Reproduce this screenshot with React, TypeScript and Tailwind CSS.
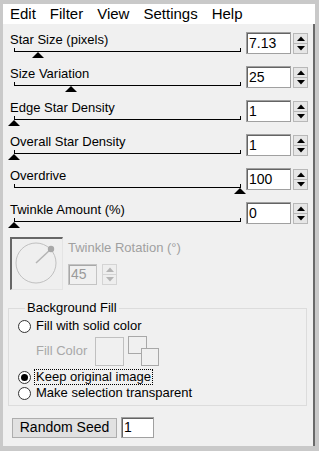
import React from "react";

const font = { fontFamily: '"Liberation Sans", Arial, sans-serif' };

type Row = { label: string; value: string; thumb: number };

const rows: Row[] = [
  { label: "Star Size (pixels)", value: "7.13", thumb: 24 },
  { label: "Size Variation", value: "25", thumb: 57 },
  { label: "Edge Star Density", value: "1", thumb: 0 },
  { label: "Overall Star Density", value: "1", thumb: 0 },
  { label: "Overdrive", value: "100", thumb: 226 },
  { label: "Twinkle Amount (%)", value: "0", thumb: 0 },
];

function Arrow({ up, color }: { up: boolean; color: string }) {
  return (
    <svg width="8" height="5" viewBox="0 0 8 5">
      <path d={up ? "M0 5 L4 0.5 L8 5 Z" : "M0 0 L4 4.5 L8 0 Z"} fill={color} />
    </svg>
  );
}

function Spinner({ disabled }: { disabled?: boolean }) {
  const c = disabled ? "#b4b4b4" : "#000";
  return (
    <div
      className={`flex flex-col w-[15px] h-[21px] border ${
        disabled ? "border-[#d4d4d4] bg-[#eeeeee]" : "border-[#b8b8b8] bg-[#e6e6e6]"
      }`}
    >
      <div className="flex-1 flex items-center justify-center">
        <Arrow up color={c} />
      </div>
      <div className={`h-px ${disabled ? "bg-[#d4d4d4]" : "bg-[#b8b8b8]"}`} />
      <div className="flex-1 flex items-center justify-center">
        <Arrow up={false} color={c} />
      </div>
    </div>
  );
}

function NumBox({
  value,
  w,
  h = "h-[22px]",
  disabled,
}: {
  value: string;
  w: string;
  h?: string;
  disabled?: boolean;
}) {
  return (
    <div
      className={`${w} ${h} flex items-center pl-[2px] text-[14px] border ${
        disabled
          ? "border-[#c4c4c4] bg-[#f0f0f0] text-[#9a9a9a] shadow-[inset_1px_1px_0_#a8a8a8]"
          : "border-[#a0a0a0] bg-white text-black shadow-[inset_1px_1px_0_#646464]"
      }`}
    >
      {value}
    </div>
  );
}

function Radio({ checked }: { checked?: boolean }) {
  return (
    <div className="w-[13px] h-[13px] rounded-full border border-[#333] bg-white flex items-center justify-center shrink-0">
      {checked && <div className="w-[7px] h-[7px] rounded-full bg-black" />}
    </div>
  );
}

function SliderRow({ row }: { row: Row }) {
  return (
    <div className="flex h-[34px]">
      <div className="ml-[7px] w-[232px]">
        <div className="mt-[8px] text-[13px] leading-[16px] text-black whitespace-nowrap">
          {row.label}
        </div>
        <div className="relative ml-[4px] w-[227px] h-[4px] border-x border-b border-black">
          {/* thumb */}
          <svg
            className="absolute top-[4px]"
            style={{ left: row.thumb - 7 }}
            width="12"
            height="6"
            viewBox="0 0 12 6"
          >
            <path d="M0 6 L6 0 L12 6 Z" fill="#000" />
          </svg>
        </div>
      </div>
      <div className="ml-[4px] mt-[8px]">
        <NumBox value={row.value} w="w-[45px]" />
      </div>
      <div className="ml-[2px] mt-[9px]">
        <Spinner />
      </div>
    </div>
  );
}

export default function App() {
  return (
    <div
      className="w-[319px] h-[451px] bg-[#c9c9c9] pt-[4px] pl-[3px] pr-[4px] pb-[5px] flex flex-col"
      style={font}
    >
      {/* Menu bar */}
      <div className="h-[20px] bg-white flex gap-[14px] pl-[7px] text-[15px] leading-[20px] text-black">
        <span>Edit</span>
        <span>Filter</span>
        <span>View</span>
        <span>Settings</span>
        <span>Help</span>
      </div>

      <div className="flex-1 bg-[#f0f0f0] border-r-2 border-[#6a6a6a] flex flex-col">
        {rows.map((r) => (
          <SliderRow key={r.label} row={r} />
        ))}

        {/* Twinkle rotation */}
        <div className="flex mt-[9px] ml-[7px]">
          <div className="w-[53px] h-[53px] border-t-2 border-l-2 border-[#666] border-b border-r border-b-[#e4e4e4] border-r-[#e4e4e4] bg-[#efefef]">
            <svg width="51" height="51" viewBox="0 0 51 51">
              <circle cx="24" cy="24" r="20" fill="none" stroke="#c0c0c0" strokeWidth="1" />
              <line x1="24" y1="24" x2="39" y2="10" stroke="#b4b4b4" strokeWidth="1.5" />
              <circle cx="39" cy="10" r="3.2" fill="#a8a8a8" />
            </svg>
          </div>
          <div className="ml-[5px] flex flex-col">
            <div className="mt-[3px] text-[13px] leading-[16px] text-[#a0a0a0] whitespace-nowrap">
              Twinkle Rotation (°)
            </div>
            <div className="flex mt-[8px] items-start">
              <NumBox value="45" w="w-[29px]" h="h-[21px]" disabled />
              <div className="ml-[5px]">
                <Spinner disabled />
              </div>
            </div>
          </div>
        </div>

        {/* Background Fill group */}
        <fieldset className="mt-[10px] ml-[5px] w-[299px] border border-[#dcdcdc] pb-[4px] pl-[9px]">
          <legend className="ml-[7px] px-[2px] text-[13px] leading-[16px] text-black">
            Background Fill
          </legend>
          <div className="flex items-center h-[16px] gap-[5px] mt-[2px] text-[13px] leading-[16px]">
            <Radio />
            <span>Fill with solid color</span>
          </div>
          <div className="flex items-center mt-[2px] ml-[18px]">
            <span className="text-[13px] leading-[16px] text-[#a8a8a8]">Fill Color</span>
            <div className="ml-[8px] w-[29px] h-[29px] border border-[#c0c0c0]" />
            <svg className="ml-[4px]" width="31" height="30" viewBox="0 0 31 30">
              <rect x="0.5" y="0.5" width="18" height="17" fill="#f0f0f0" stroke="#a8a8a8" />
              <rect x="13.5" y="12.5" width="17" height="17" fill="#f0f0f0" stroke="#a8a8a8" />
            </svg>
          </div>
          <div className="flex items-center h-[16px] gap-[5px] mt-[3px] text-[13px] leading-[16px]">
            <Radio checked />
            <span className="outline outline-1 outline-dotted outline-black -ml-[1px] px-[1px] leading-[14px]">
              Keep original image
            </span>
          </div>
          <div className="flex items-center h-[16px] gap-[5px] text-[13px] leading-[16px]">
            <Radio />
            <span>Make selection transparent</span>
          </div>
        </fieldset>

        {/* Random seed */}
        <div className="flex items-center mt-[11px] ml-[9px]">
          <div className="w-[105px] h-[20px] bg-[#e1e1e1] border border-[#adadad] flex items-center justify-center text-[14px] text-black">
            Random Seed
          </div>
          <div className="ml-[4px]">
            <NumBox value="1" w="w-[33px]" h="h-[21px]" />
          </div>
        </div>
      </div>
    </div>
  );
}
